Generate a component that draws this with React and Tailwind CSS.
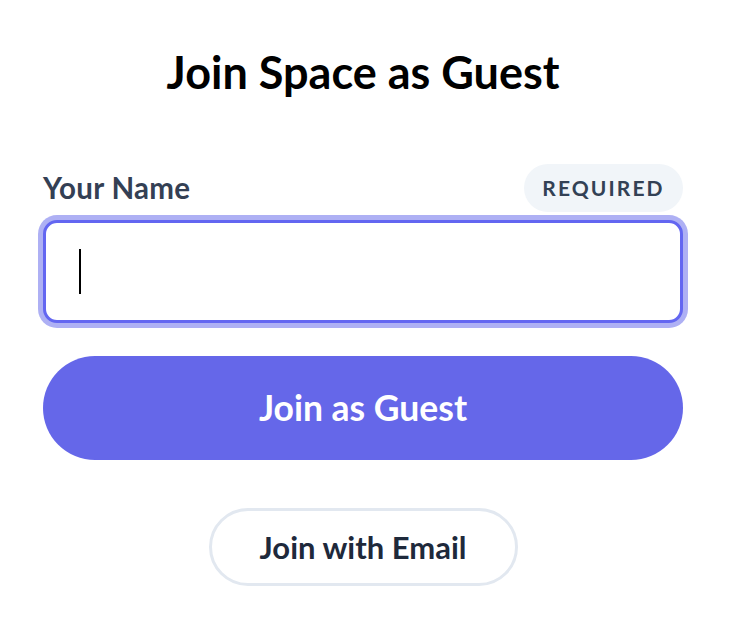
import React from 'react';

function App() {
  return (
    <div className="min-h-screen w-full bg-white font-['Lato','Noto_Sans',sans-serif]">
      <div className="ml-[43px] flex w-[640px] flex-col pt-[46px]">
        {/* Title */}
        <h1 className="h-[52px] text-center text-[45px] font-bold leading-[52px] text-black">
          Join Space as Guest
        </h1>

        {/* Label row */}
        <div className="mt-[66px] flex h-[48px] items-center justify-between">
          <label className="text-[29.5px] font-bold tracking-[0.01em] text-[#344054]">Your Name</label>
          <span className="flex h-[48px] w-[159px] items-center justify-center rounded-full bg-[#f1f5f9] text-[21px] font-bold tracking-[0.1em] text-[#334155]">
            REQUIRED
          </span>
        </div>

        {/* Focused input */}
        <div className="mt-[8px] flex h-[103px] items-center rounded-[14px] border-[3px] border-[#6366f1] bg-white pl-[33px] ring-[5px] ring-[#aeb0f4]">
          <span className="block h-[45px] w-[2px] bg-black" />
        </div>

        {/* Primary button */}
        <button className="mt-[33px] flex h-[104px] w-full items-center justify-center rounded-full bg-[#6567e9] text-[35.5px] font-bold text-white">
          Join as Guest
        </button>

        {/* Secondary button */}
        <button className="mt-[48px] flex h-[78px] w-[309px] items-center justify-center self-center rounded-full border-[3px] border-[#e2e8f0] bg-white text-[31px] font-bold text-[#1e293b]">
          Join with Email
        </button>
      </div>
    </div>
  );
}

export default App;
